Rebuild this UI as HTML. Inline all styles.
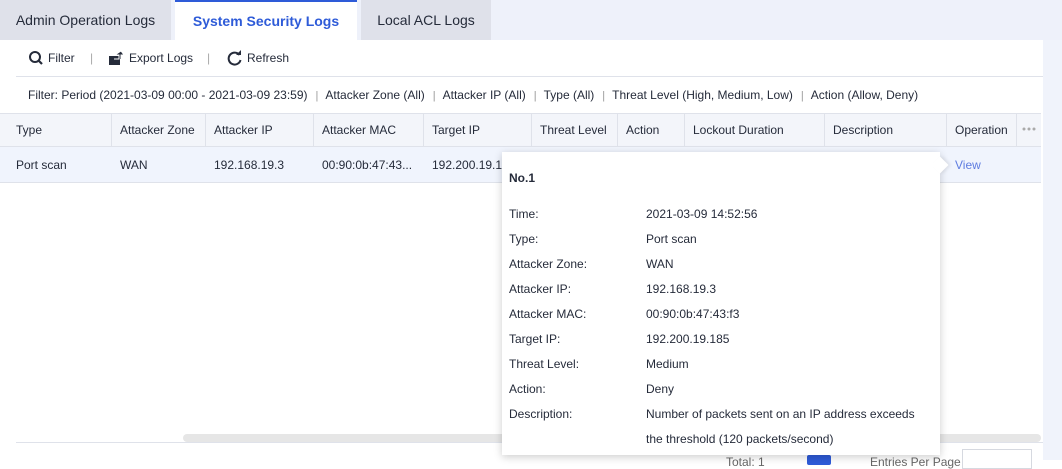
<!DOCTYPE html>
<html><head><style>
*{margin:0;padding:0;box-sizing:border-box}
body{width:1062px;height:460px;overflow:hidden;background:#fff;font-family:"Liberation Sans",Arial,sans-serif;font-size:12px;color:#252b3a;position:relative}
.a{position:absolute;white-space:nowrap}
.topbar{position:absolute;left:0;top:0;width:1062px;height:40px;background:#eef1fa}
.tab{position:absolute;top:0;height:40px;background:#dfe1ea;font-size:14px;line-height:40px;text-align:center;color:#252b3a}
.rstrip{position:absolute;left:1043px;top:40px;width:19px;height:420px;background:#f0f3fb}
.hdr{position:absolute;left:0;top:113px;width:1041px;height:34px;background:#f3f5fa;border-top:1px solid #dfe2ea;border-bottom:1px solid #dfe2ea}
.row{position:absolute;left:0;top:147px;width:1041px;height:36px;background:#f0f4fd;border-bottom:1px solid #dfe2ea}
.sep{position:absolute;top:113px;width:1px;height:34px;background:#dfe2ea}
.pop{position:absolute;left:502px;top:152px;width:438px;height:303px;background:#fff;box-shadow:0 2px 8px rgba(0,0,0,.2)}
.pop .l{position:absolute;left:7px}
.pop .v{position:absolute;left:144px}
.fs{color:#999;padding:0 7px 0 8px;font-size:11px}
</style></head><body>
<div class="topbar"></div>
<div class="tab" style="left:0;width:171px">Admin Operation Logs</div>
<div class="tab" style="left:175px;width:182px;background:#fff;border-top:2px solid #2e5bd8;color:#2e5bd8;font-weight:bold;line-height:38px">System Security Logs</div>
<div class="tab" style="left:361px;width:130px">Local ACL Logs</div>
<div class="rstrip"></div>

<svg class="a" style="left:28px;top:50px" width="16" height="16" viewBox="0 0 16 16"><circle cx="7" cy="7" r="5" fill="none" stroke="#252b3a" stroke-width="2"/><path d="M10.5 10.5L14 14" stroke="#252b3a" stroke-width="2.2"/></svg>
<div class="a" style="left:48px;top:51px">Filter</div>
<div class="a" style="left:90px;top:51px;color:#aaa">|</div>
<svg class="a" style="left:108px;top:50px" width="17" height="16" viewBox="0 0 17 16"><rect x="1" y="6" width="11" height="9" fill="#252b3a"/><path d="M6 9h5V5h-4l6-4 3 4h-3v4" fill="#252b3a" stroke="#fff" stroke-width="1"/></svg>
<div class="a" style="left:129px;top:51px">Export Logs</div>
<div class="a" style="left:207px;top:51px;color:#aaa">|</div>
<svg class="a" style="left:227px;top:50px" width="16" height="16" viewBox="0 0 16 16"><path d="M12.5 5A6 6 0 1 0 13.5 10" fill="none" stroke="#252b3a" stroke-width="2"/><path d="M9 5h5V0z" fill="#252b3a"/></svg>
<div class="a" style="left:247px;top:51px">Refresh</div>
<div class="a" style="left:16px;top:76px;width:1027px;height:1px;background:#dfe2ea"></div>
<div class="a" style="left:28px;top:88px">Filter: Period (2021-03-09 00:00 - 2021-03-09 23:59)<span class="fs">|</span>Attacker Zone (All)<span class="fs">|</span>Attacker IP (All)<span class="fs">|</span>Type (All)<span class="fs">|</span>Threat Level (High, Medium, Low)<span class="fs">|</span>Action (Allow, Deny)</div>

<div class="hdr"></div>
<div class="sep" style="left:111px"></div><div class="sep" style="left:205px"></div><div class="sep" style="left:313px"></div><div class="sep" style="left:423px"></div><div class="sep" style="left:531px"></div><div class="sep" style="left:617px"></div><div class="sep" style="left:684px"></div><div class="sep" style="left:824px"></div><div class="sep" style="left:946px"></div><div class="sep" style="left:1016px"></div>
<div class="a" style="left:16px;top:123px">Type</div>
<div class="a" style="left:120px;top:123px">Attacker Zone</div>
<div class="a" style="left:214px;top:123px">Attacker IP</div>
<div class="a" style="left:322px;top:123px">Attacker MAC</div>
<div class="a" style="left:432px;top:123px">Target IP</div>
<div class="a" style="left:540px;top:123px">Threat Level</div>
<div class="a" style="left:626px;top:123px">Action</div>
<div class="a" style="left:693px;top:123px">Lockout Duration</div>
<div class="a" style="left:833px;top:123px">Description</div>
<div class="a" style="left:955px;top:123px">Operation</div>
<svg class="a" style="left:1022px;top:127px" width="14" height="4"><circle cx="2" cy="2" r="1.5" fill="#aaa"/><circle cx="7" cy="2" r="1.5" fill="#aaa"/><circle cx="12" cy="2" r="1.5" fill="#aaa"/></svg>
<div class="row"></div>
<div class="a" style="left:16px;top:158px">Port scan</div>
<div class="a" style="left:120px;top:158px">WAN</div>
<div class="a" style="left:214px;top:158px">192.168.19.3</div>
<div class="a" style="left:322px;top:158px">00:90:0b:47:43...</div>
<div class="a" style="left:432px;top:158px">192.200.19.185</div>
<div class="a" style="left:955px;top:158px;color:#5e7ce0">View</div>

<div class="a" style="left:183px;top:434px;width:858px;height:8px;background:#e6e6e6;border-radius:4px"></div>
<div class="a" style="left:16px;top:442px;width:1027px;height:1px;background:#dfe2ea"></div>
<div class="a" style="left:726px;top:455px;color:#666">Total: 1</div>
<div class="a" style="left:807px;top:455px;width:24px;height:10px;background:#2e5bd8;border-radius:2px"></div>
<div class="a" style="left:870px;top:455px;color:#666">Entries Per Page</div>
<div class="a" style="left:962px;top:449px;width:70px;height:20px;border:1px solid #d6d9e0;background:#fff"></div>

<div class="pop">
<div class="l" style="top:19px;font-weight:bold">No.1</div>
<div class="l" style="top:55px">Time:</div><div class="v" style="top:55px">2021-03-09 14:52:56</div>
<div class="l" style="top:80px">Type:</div><div class="v" style="top:80px">Port scan</div>
<div class="l" style="top:105px">Attacker Zone:</div><div class="v" style="top:105px">WAN</div>
<div class="l" style="top:130px">Attacker IP:</div><div class="v" style="top:130px">192.168.19.3</div>
<div class="l" style="top:155px">Attacker MAC:</div><div class="v" style="top:155px">00:90:0b:47:43:f3</div>
<div class="l" style="top:180px">Target IP:</div><div class="v" style="top:180px">192.200.19.185</div>
<div class="l" style="top:205px">Threat Level:</div><div class="v" style="top:205px">Medium</div>
<div class="l" style="top:230px">Action:</div><div class="v" style="top:230px">Deny</div>
<div class="l" style="top:255px">Description:</div><div class="v" style="top:255px">Number of packets sent on an IP address exceeds</div>
<div class="v" style="top:280px">the threshold (120 packets/second)</div>
</div>
<div class="a" style="left:934px;top:159px;width:12px;height:12px;background:#fff;transform:rotate(45deg);box-shadow:2px -2px 3px rgba(0,0,0,.08)"></div>
</body></html>
